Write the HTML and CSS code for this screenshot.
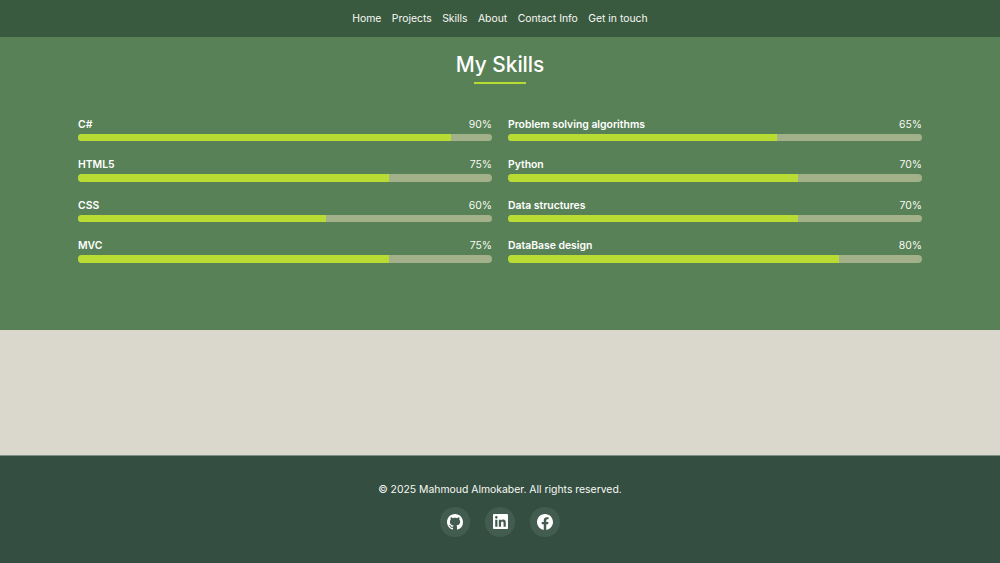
FILE: index.html
```html
<!DOCTYPE html>
<html lang="en">
<head>
<meta charset="utf-8">
<title>My Skills</title>
<link rel="stylesheet" href="styles.css">
</head>
<body>
<header class="site-header">
  <nav class="nav">
    <a href="#">Home</a>
    <a href="#">Projects</a>
    <a href="#">Skills</a>
    <a href="#">About</a>
    <a href="#">Contact Info</a>
    <a href="#">Get in touch</a>
  </nav>
</header>
<main>
  <section class="skills">
    <h1 class="title">My Skills</h1>
    <div class="skill-grid">
      <div class="skill"><div class="skill-head"><span class="name">C#</span><span class="pct">90%</span></div><div class="track"><div class="fill" style="width:90%"></div></div></div>
      <div class="skill"><div class="skill-head"><span class="name">Problem solving algorithms</span><span class="pct">65%</span></div><div class="track"><div class="fill" style="width:65%"></div></div></div>
      <div class="skill"><div class="skill-head"><span class="name">HTML5</span><span class="pct">75%</span></div><div class="track"><div class="fill" style="width:75%"></div></div></div>
      <div class="skill"><div class="skill-head"><span class="name">Python</span><span class="pct">70%</span></div><div class="track"><div class="fill" style="width:70%"></div></div></div>
      <div class="skill"><div class="skill-head"><span class="name">CSS</span><span class="pct">60%</span></div><div class="track"><div class="fill" style="width:60%"></div></div></div>
      <div class="skill"><div class="skill-head"><span class="name">Data structures</span><span class="pct">70%</span></div><div class="track"><div class="fill" style="width:70%"></div></div></div>
      <div class="skill"><div class="skill-head"><span class="name">MVC</span><span class="pct">75%</span></div><div class="track"><div class="fill" style="width:75%"></div></div></div>
      <div class="skill"><div class="skill-head"><span class="name">DataBase design</span><span class="pct">80%</span></div><div class="track"><div class="fill" style="width:80%"></div></div></div>
    </div>
  </section>
  <section class="blank"></section>
</main>
<footer class="site-footer">
  <p class="copy">© 2025 Mahmoud Almokaber. All rights reserved.</p>
  <div class="socials">
    <a class="social" href="#" aria-label="GitHub"><svg class="icon" viewBox="0 0 16 16"><path d="M8 0C3.58 0 0 3.58 0 8c0 3.54 2.29 6.53 5.47 7.59.4.07.55-.17.55-.38 0-.19-.01-.82-.01-1.49-2.01.37-2.53-.49-2.69-.94-.09-.23-.48-.94-.82-1.13-.28-.15-.68-.52-.01-.53.63-.01 1.08.58 1.23.82.72 1.21 1.87.87 2.33.66.07-.52.28-.87.51-1.07-1.78-.2-3.64-.89-3.64-3.95 0-.87.31-1.59.82-2.15-.08-.2-.36-1.02.08-2.12 0 0 .67-.21 2.2.82.64-.18 1.32-.27 2-.27.68 0 1.36.09 2 .27 1.53-1.04 2.2-.82 2.2-.82.44 1.1.16 1.92.08 2.12.51.56.82 1.27.82 2.15 0 3.07-1.87 3.75-3.65 3.95.29.25.54.73.54 1.48 0 1.07-.01 1.93-.01 2.2 0 .21.15.46.55.38A8.013 8.013 0 0016 8c0-4.42-3.58-8-8-8z"/></svg></a>
    <a class="social" href="#" aria-label="LinkedIn"><svg class="icon icon-square" viewBox="0 0 24 24"><path d="M20.447 20.452h-3.554v-5.569c0-1.328-.027-3.037-1.852-3.037-1.853 0-2.136 1.445-2.136 2.939v5.667H9.351V9h3.414v1.561h.046c.477-.9 1.637-1.85 3.37-1.85 3.601 0 4.267 2.37 4.267 5.455v6.286zM5.337 7.433c-1.144 0-2.063-.926-2.063-2.065 0-1.138.92-2.063 2.063-2.063 1.14 0 2.064.925 2.064 2.063 0 1.139-.925 2.065-2.064 2.065zm1.782 13.019H3.555V9h3.564v11.452zM22.225 0H1.771C.792 0 0 .774 0 1.729v20.542C0 23.227.792 24 1.771 24h20.451C23.2 24 24 23.227 24 22.271V1.729C24 .774 23.2 0 22.222 0h.003z"/></svg></a>
    <a class="social" href="#" aria-label="Facebook"><svg class="icon" viewBox="0 0 24 24"><path d="M24 12.073c0-6.627-5.373-12-12-12s-12 5.373-12 12c0 5.99 4.388 10.954 10.125 11.854v-8.385H7.078v-3.47h3.047V9.43c0-3.007 1.792-4.669 4.533-4.669 1.312 0 2.686.235 2.686.235v2.953H15.83c-1.491 0-1.956.925-1.956 1.874v2.25h3.328l-.532 3.47h-2.796v8.385C19.612 23.027 24 18.062 24 12.073z"/></svg></a>
  </div>
</footer>
</body>
</html>
```
FILE: styles.css
```css
* { box-sizing: border-box; }
html, body { margin: 0; padding: 0; }
body {
  font-family: Inter, "Liberation Sans", sans-serif;
  color: #fff;
  background: #dad7cd;
  height: 563px;
  overflow: hidden;
}
.site-header {
  height: 37px;
  background: #3a5a40;
  display: flex;
  align-items: center;
  justify-content: center;
}
.nav { display: flex; gap: 10.4px; }
.nav a {
  color: #f8f9f4;
  text-decoration: none;
  font-size: 10.4px;
  line-height: 16px;
}
.skills {
  height: 293px;
  background: #588157;
  padding: 14px 78px 0;
}
.title {
  width: max-content;
  margin: 0 auto 38px;
  font-size: 20.8px;
  line-height: 28px;
  font-weight: 500;
  text-align: center;
  position: relative;
}
.title::after {
  content: "";
  position: absolute;
  left: 18px;
  right: 18px;
  bottom: -5px;
  height: 2px;
  background: #b8dc34;
}
.skill-grid {
  display: grid;
  grid-template-columns: 1fr 1fr;
  column-gap: 16px;
  row-gap: 16.3px;
}
.skill-head {
  display: flex;
  justify-content: space-between;
  font-size: 10.4px;
  line-height: 16px;
  margin-bottom: 1px;
}
.name { font-weight: 600; }
.pct { color: #f8f9f4; }
.track {
  height: 7.2px;
  border-radius: 4px;
  background: #a3b18a;
  overflow: hidden;
}
.fill { height: 100%; background: #b8dc34; }
.blank { height: 125px; background: #dad7cd; }
.site-footer {
  height: 108px;
  background: #344e41;
  border-top: 1px solid #7f8f85;
  padding-top: 26px;
  text-align: center;
}
.copy {
  margin: 0 0 9px;
  font-size: 10.4px;
  line-height: 16px;
  color: #f8f9f4;
}
.socials { display: flex; justify-content: center; gap: 15.5px; }
.social {
  width: 29.6px;
  height: 29.6px;
  border-radius: 50%;
  background: #435c50;
  display: flex;
  align-items: center;
  justify-content: center;
}
.icon { width: 16px; height: 16px; fill: #fff; }
.icon-square { width: 15px; height: 15px; }
```
